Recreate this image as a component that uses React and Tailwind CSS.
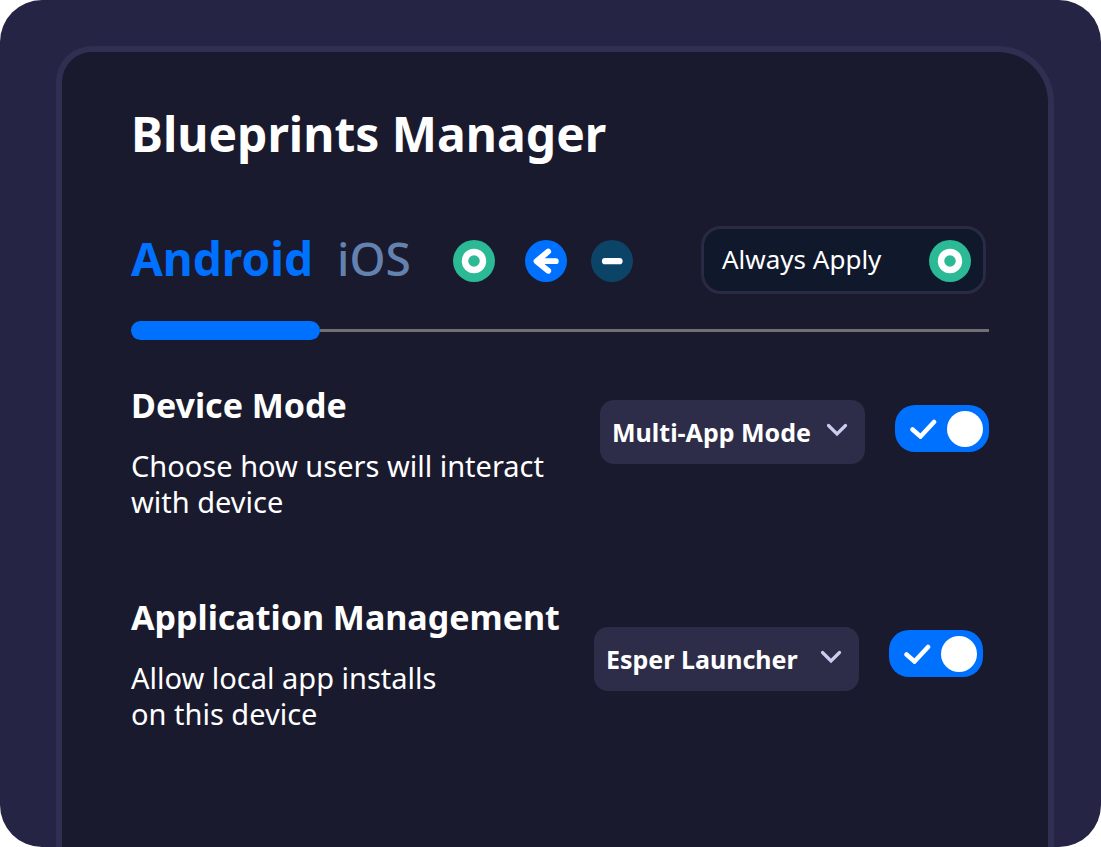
import { useState } from "react";

const RingIcon = () => (
  <svg className="size-[42px] shrink-0" viewBox="0 0 42 42" aria-hidden="true">
    <circle cx="21" cy="21" r="21" fill="#2cb996" />
    <circle cx="21" cy="21" r="9" fill="none" stroke="#fff" strokeWidth="6.5" />
  </svg>
);

const ArrowIcon = () => (
  <svg className="size-[42px] shrink-0" viewBox="0 0 42 42" aria-hidden="true">
    <circle cx="21" cy="21" r="21" fill="#0071ff" />
    <path
      d="M23.2 11.6 11.5 21.2l11.7 9.6M13 21.2h17.8"
      fill="none"
      stroke="#fff"
      strokeWidth="5.8"
      strokeLinecap="round"
      strokeLinejoin="round"
    />
    <path d="M11.5 21.2 19 15v12.4z" fill="#fff" />
  </svg>
);

const MinusIcon = () => (
  <svg className="size-[42px] shrink-0" viewBox="0 0 42 42" aria-hidden="true">
    <circle cx="21" cy="21" r="21" fill="#0c4468" />
    <path d="M14 21.2h14.5" stroke="#fff" strokeWidth="6.2" strokeLinecap="round" />
  </svg>
);

const ModeSelect = ({ label, options }) => (
  <div className="relative">
    <select
      aria-label={label}
      className="h-16 w-[265px] appearance-none rounded-[14px] bg-[#2d2c49] pt-px pr-12 pl-3 text-[25px] font-bold text-white"
    >
      {options.map((option) => (
        <option key={option}>{option}</option>
      ))}
    </select>
    <svg className="pointer-events-none absolute top-[22px] right-[17px] h-4 w-[22px]" viewBox="0 0 22 16" aria-hidden="true">
      <path d="m2.5 3.5 8.5 8.5 8.5-8.5" fill="none" stroke="#c9cdf0" strokeWidth="3.2" strokeLinecap="round" />
    </svg>
  </div>
);

const Toggle = ({ label }) => {
  const [on, setOn] = useState(true);

  return (
    <label
      className={`flex h-[47px] w-[94px] cursor-pointer items-center rounded-[20px] px-[6px] ${
        on ? "justify-between bg-[#0071ff]" : "flex-row-reverse justify-end bg-[#2d2c49]"
      }`}
    >
      <input
        type="checkbox"
        className="sr-only"
        aria-label={label}
        checked={on}
        onChange={(e) => setOn(e.target.checked)}
      />
      {on && (
        <svg className="ml-2 h-5 w-7" viewBox="0 0 28 20" aria-hidden="true">
          <path d="m3.5 10.5 8 7L25 3" fill="none" stroke="#fff" strokeWidth="4.5" strokeLinecap="round" />
        </svg>
      )}
      <span className="size-9 rounded-full bg-white" />
    </label>
  );
};

const SettingText = ({ title, lines }) => (
  <div>
    <h2 className="text-[34px] leading-[44px] font-bold whitespace-nowrap">{title}</h2>
    <p className="mt-[21px] text-[29px] leading-9 whitespace-nowrap">
      {lines[0]}
      <br />
      {lines[1]}
    </p>
  </div>
);

export default function App() {
  const [tab, setTab] = useState("android");

  return (
    <div className="flex min-h-screen flex-col overflow-hidden rounded-[42px] bg-[#252444] pt-[46px] pr-[47px] pl-14 font-['Noto_Sans',sans-serif] text-white">
      <main className="flex-1 rounded-tl-[36px] rounded-tr-[56px] border-x-[6px] border-t-[6px] border-[#302f52] bg-[#1a1a2e] pt-[50px] pr-[59px] pl-[69px]">
        <h1 className="text-[48px] leading-[64px] font-bold">Blueprints Manager</h1>

        <div className="mt-[60px] flex items-center justify-between pr-[3px]">
          <div className="flex items-center">
            <button
              type="button"
              onClick={() => setTab("android")}
              className={`pb-1 text-[46px] leading-[60px] ${tab === "android" ? "font-bold text-[#0071ff]" : "font-medium text-[#6482b0]"}`}
            >
              Android
            </button>
            <button
              type="button"
              onClick={() => setTab("ios")}
              className={`ml-6 pb-1 text-[46px] leading-[60px] ${tab === "ios" ? "font-bold text-[#0071ff]" : "font-medium text-[#6482b0]"}`}
            >
              iOS
            </button>
            <div className="ml-[42px] flex items-center pt-[2px]">
              <RingIcon />
              <span className="ml-[30px] flex gap-6">
                <ArrowIcon />
                <MinusIcon />
              </span>
            </div>
          </div>
          <button
            type="button"
            className="flex h-[68px] w-[285px] items-center justify-between rounded-[20px] border-[3px] border-[#2b2a45] bg-[#0f192b] pt-[2px] pr-3 pl-[18px] text-[26px]"
          >
            <span className="pb-1">Always Apply</span>
            <RingIcon />
          </button>
        </div>

        <div className="mt-[27px] flex items-center">
          <div className="h-[19px] w-[22%] rounded-full bg-[#0071ff]" />
          <div className="h-[3px] flex-1 bg-[#706f73]" />
        </div>

        <section className="mt-[43px] flex items-start justify-between">
          <SettingText title="Device Mode" lines={["Choose how users will interact", "with device"]} />
          <div className="mt-[17px] flex items-start gap-[30px]">
            <ModeSelect label="Device Mode" options={["Multi-App Mode", "Kiosk Mode"]} />
            <div className="mt-[5px]">
              <Toggle label="Enable Device Mode" />
            </div>
          </div>
        </section>

        <section className="mt-[75px] flex items-start justify-between pr-[6px]">
          <SettingText title="Application Management" lines={["Allow local app installs", "on this device"]} />
          <div className="mt-8 flex items-start gap-[30px]">
            <ModeSelect label="Application Management" options={["Esper Launcher", "Default Launcher"]} />
            <div className="mt-[3px]">
              <Toggle label="Enable Application Management" />
            </div>
          </div>
        </section>
      </main>
    </div>
  );
}
